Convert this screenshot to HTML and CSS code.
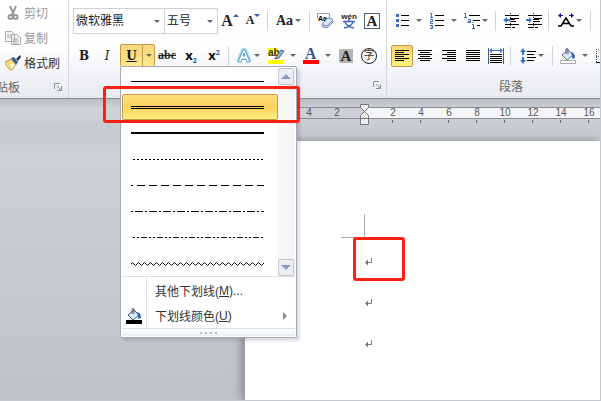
FILE: index.html
```html
<!DOCTYPE html>
<html lang="zh-CN">
<head>
<title>文档编辑</title>
<meta charset="utf-8">
<meta name="viewport" content="width=device-width, initial-scale=1">
<link rel="stylesheet" href="styles.css">
</head>
<body>

<header class="ribbon">
  <section class="group clipboard">
    <button class="cmd" disabled>
      <svg width="16" height="16" viewBox="0 0 16 16" fill="none" stroke="#999" stroke-width="2"><path d="M5 1l4 9M11 1L7 10"/><circle cx="5.500" cy="12" r="2"/><circle cx="10.500" cy="12" r="2"/></svg>
      剪切
    </button>
    <button class="cmd" disabled>
      <svg width="16" height="16" viewBox="0 0 16 16" fill="#f4f4f4" stroke="#aaa"><path d="M.5 1.500h6l3 3v7h-9zM6.500 4.500h5l4 3v7h-9z"/><path d="M2 5h4M2 7h4M8 9h5M8 11h6M8 13h5"/></svg>
      复制
    </button>
    <button class="cmd">
      <svg width="16" height="16" viewBox="0 0 16 16"><path d="M0 7l6-3 5 5-4 6c-2 0-6-3-7-8z" fill="#f5dc7a" stroke="#b89a50"/><path d="M5 9l5 0-3 5z" fill="#fffbe0"/><path d="M6 3l3-1 4 5-2 3z" fill="#405f9c"/><path d="M11 4l4-4 1 2-3 4z" fill="#26365c"/></svg>
      格式刷
    </button>
    <div class="caption">
      <span>贴板</span>
      <button class="launcher" aria-label="剪贴板选项"><svg width="8" height="8" viewBox="0 0 8 8" fill="none" stroke="#8b929c"><path d="M.5 6V.5H6M3 3l4 4M7.500 3v4.500H3"/></svg></button>
    </div>
  </section>

  <section class="group font">
    <div class="tools">
      <label class="combo combo-name"><select aria-label="字体"><option>微软雅黑</option></select></label>
      <label class="combo combo-size"><select aria-label="字号"><option>五号</option></select></label>
      <button class="tool serif grow" aria-label="增大字体">A<i class="up"></i></button>
      <button class="tool narrow serif shrink" aria-label="缩小字体">A<i class="down"></i></button>
      <span class="sep"></span>
      <button class="split compact serif case" aria-label="更改大小写">Aa<i class="arrow"></i></button>
      <span class="sep"></span>
      <button class="tool" aria-label="清除格式">
        <svg width="18" height="16" viewBox="0 0 18 16"><path d="M1.500 6V.500h12V6" fill="#fff" stroke="#8a99b5"/><text x="2" y="8" class="tiny">Aa</text><path d="M6 11l6-6 4 1 1 3-6 6-4-1z" fill="#dbe6f5" stroke="#7189b3"/><path d="M7 12l4 1 5-5" fill="none" stroke="#7189b3"/></svg>
      </button>
      <button class="tool" aria-label="拼音指南">
        <svg width="18" height="16" viewBox="0 0 18 16"><text x="9" y="6" text-anchor="middle" class="pinyin">wén</text><path d="M3 8.500h12M9 6v2M5 9c1 3 4 5 9 6M13 9c-1 3-4 5-9 6" fill="none" stroke="#3b63c4" stroke-width="1.500"/></svg>
      </button>
      <button class="tool narrow" aria-label="字符边框"><span class="boxed">A</span></button>
    </div>
    <div class="tools">
      <button class="tool narrow serif slab" aria-label="加粗">B</button>
      <button class="tool serif slab italic" aria-label="倾斜">I</button>
      <div class="underline">
        <button class="underline-main" aria-label="下划线">U</button>
        <button class="underline-drop" aria-label="下划线样式"><i class="arrow"></i></button>

        <div class="menu">
          <div class="styles">
            <div class="style-list">
              <button class="style" aria-label="单线"><svg width="133" height="5"><path d="M0 2.500h133"/></svg></button>
              <button class="style selected" aria-label="双线"><svg width="133" height="5"><path d="M0 1.500h133M0 3.500h133"/></svg></button>
              <button class="style" aria-label="粗线"><svg width="133" height="6"><path d="M0 3h133" stroke-width="2"/></svg></button>
              <button class="style" aria-label="点线"><svg width="133" height="5"><path d="M2 2.500h131" stroke-dasharray="2 2"/></svg></button>
              <button class="style" aria-label="虚线"><svg width="133" height="5"><path d="M0 2.500h2M6 2.500h127" stroke-dasharray="8 4"/></svg></button>
              <button class="style" aria-label="点划线"><svg width="133" height="5"><path d="M0 2.500h133" stroke-dasharray="2 2 8 2"/></svg></button>
              <button class="style" aria-label="双点划线"><svg width="133" height="5"><path d="M2 2.500h131" stroke-dasharray="2 2 2 2 6 2"/></svg></button>
              <button class="style" aria-label="波浪线"><svg width="133" height="5"><path id="wave" fill="none" d="M0 3"/></svg></button>
            </div>
            <div class="scroll">
              <button aria-label="向上滚动"><i class="up"></i></button>
              <button aria-label="向下滚动"><i class="down"></i></button>
            </div>
          </div>
          <div class="more">
            <button class="more-item"><span class="more-icon"></span>其他下划线(<u>M</u>)...</button>
            <button class="more-item">
              <span class="more-icon"><svg width="16" height="16" viewBox="0 0 16 16"><path d="M2 7l6-5 5 5-6 5z" fill="#dce8f6" stroke="#39537e"/><path d="M6 6V1q1-1 2 0v5" fill="none" stroke="#4b5d7c"/><path d="M10 4q5 0 5 6l-3 1q1-4-2-7z" fill="#2f62b5"/><path d="M0 12h16v4H0z"/></svg></span>
              下划线颜色(<u>U</u>)<i class="sub"></i>
            </button>
          </div>
          <div class="grip"><i></i><i></i><i></i><i></i></div>
        </div>
      </div>
      <button class="tool serif strike" aria-label="删除线">abc</button>
      <button class="tool sans script" aria-label="下标">x<sub>2</sub></button>
      <button class="tool narrow sans script" aria-label="上标">x<sup>2</sup></button>
      <span class="sep"></span>
      <button class="split compact effects" aria-label="文本效果"><svg width="16" height="16" viewBox="0 0 16 16" fill="none" stroke-linejoin="round"><path d="M2 14L7 2h2l5 12M5 10h6" stroke="#a9d9f2" stroke-width="4"/><path d="M2 14L7 2h2l5 12h-3l-1-3H6l-1 3zM7 8h2L8 5z" fill="#fff" stroke="#559bd0"/></svg><i class="arrow"></i></button>
      <button class="split" aria-label="突出显示">
        <svg width="16" height="16" viewBox="0 0 16 16"><path d="M0 0h10v8H0zM0 12h16v4H0z" fill="#ff0"/><text x="0" y="8" class="mark">ab</text><path d="M8 9l5-7 3 1-5 7-4 1z" fill="#9bb4dc" stroke="#48628f"/><path d="M5 11l3-2 1 1z" fill="#b58a25"/></svg><i class="arrow"></i>
      </button>
      <button class="split" aria-label="字体颜色"><span class="colored">A</span><i class="arrow"></i></button>
      <button class="tool" aria-label="字符底纹"><span class="shaded">A</span></button>
      <button class="tool narrow" aria-label="带圈字符"><span class="circled">字</span></button>
    </div>
    <div class="caption">
      <button class="launcher" aria-label="字体选项"><svg width="8" height="8" viewBox="0 0 8 8" fill="none" stroke="#8b929c"><path d="M.5 6V.5H6M3 3l4 4M7.500 3v4.500H3"/></svg></button>
    </div>
  </section>

  <section class="group paragraph">
    <div class="tools">
      <button class="split" aria-label="项目符号"><svg width="16" height="16" viewBox="0 0 16 16"><path d="M2 1h3v3H2zM2 6h3v3H2zM2 11h3v3H2z" fill="#3e68b8"/><path d="M7 2.500h8M7 7.500h8M7 12.500h8" stroke="#000"/></svg><i class="arrow"></i></button>
      <button class="split" aria-label="编号"><svg width="16" height="16" viewBox="0 0 16 16"><path d="M1 .5h1.500V4M1 4.500h3M1 6.500h2.500v2H1.500v2H4M1 12.500h2.500v3H1M2 14h2" fill="none" stroke="#3e68b8"/><path d="M6 2.500h9M6 7.500h9M6 12.500h9" stroke="#000"/></svg><i class="arrow"></i></button>
      <button class="split compact multilevel" aria-label="多级列表"><svg width="16" height="16" viewBox="0 0 16 16"><path d="M0 .5h1.500V4M0 4.500h3M4 6.500h2.500v3H4v-1h2M9 9v1M8 11.500h1.500V15M8 15.500h3" fill="none" stroke="#3e68b8"/><path d="M5 2.500h11M9 7.500h7M13 12.500h3" stroke="#000"/></svg><i class="arrow"></i></button>
      <span class="sep"></span>
      <button class="tool" aria-label="减少缩进量"><svg width="16" height="16" viewBox="0 0 16 16"><path d="M2 2.500h14M7 5.500h9M7 8.500h6M2 11.500h14M2 14.500h5M9 14.500h3" stroke="#000"/><path d="M7 6h5v1H7z"/><path d="M0 7l4-3v2h3v2H4v2z" fill="#3e74cc"/><path d="M7.500 0v16" stroke="#222" stroke-dasharray="1 1"/></svg></button>
      <button class="tool narrow" aria-label="增加缩进量"><svg width="16" height="16" viewBox="0 0 16 16"><path d="M2 2.500h14M8 5.500h8M8 8.500h6M2 11.500h14M2 14.500h5M9 14.500h3" stroke="#000"/><path d="M8 6h5v1H8z"/><path d="M6 7L3 4v2H0v2h3v2z" fill="#3e74cc"/><path d="M7.500 0v16" stroke="#222" stroke-dasharray="1 1"/></svg></button>
      <span class="sep"></span>
      <button class="split compact" aria-label="中文版式"><svg width="16" height="16" viewBox="0 0 16 16"><path d="M0 2.500l3-2.500v2h2v1H3v2zM16 2.500l-3-2.500v2h-2v1h2v2z" fill="#10108c"/><path d="M0 13h3l5-8 5 8h3M4 10.500h8" fill="none" stroke="#000" stroke-width="1.500"/></svg><i class="arrow"></i></button>
      <span class="sep"></span>
      <button class="split" aria-label="排序"><svg width="16" height="16" viewBox="0 0 16 16" fill="none"><path d="M2 6l2-5 2 5M3 4h3" stroke="#3e68b8"/><path d="M2 9h5l-5 6h5" stroke="#c33"/></svg></button>
    </div>
    <div class="tools">
      <button class="tool narrow active" aria-label="左对齐"><svg width="14" height="14" viewBox="0 0 14 14" stroke="#000"><path d="M0 1.500h14M0 3.500h9M0 5.500h14M0 7.500h9M0 9.500h14M0 11.500h9"/></svg></button>
      <button class="tool" aria-label="居中"><svg width="14" height="14" viewBox="0 0 14 14" stroke="#000"><path d="M0 1.500h14M2 3.500h10M0 5.500h14M2 7.500h10M0 9.500h14M2 11.500h10"/></svg></button>
      <button class="tool" aria-label="右对齐"><svg width="14" height="14" viewBox="0 0 14 14" stroke="#000"><path d="M0 1.500h14M5 3.500h9M0 5.500h14M5 7.500h9M0 9.500h14M5 11.500h9"/></svg></button>
      <button class="tool" aria-label="两端对齐"><svg width="14" height="14" viewBox="0 0 14 14" stroke="#000"><path d="M0 1.500h14M0 3.500h14M0 5.500h14M0 7.500h14M0 9.500h14M0 11.500h14"/></svg></button>
      <button class="tool narrow" aria-label="分散对齐"><svg width="16" height="16" viewBox="0 0 16 16"><path d="M.5 0v16M15.500 0v16" stroke="#4d5f80"/><path d="M1 2.500L4 0v2h8V0l3 2.500L12 5V3H4v2z" fill="#3e74cc"/><path d="M2 6.500h12M2 8.500h12M2 10.500h12M2 12.500h12M2 14.500h12" stroke="#000"/></svg></button>
      <span class="sep"></span>
      <button class="split compact" aria-label="行距"><svg width="16" height="16" viewBox="0 0 16 16"><path d="M3 0l3 4H4v3H2V4H0zM3 16l3-4H4V9H2v3H0z" fill="#3e74cc"/><path d="M7 3.500h9M7 6.500h7M7 9.500h9M7 12.500h7" stroke="#000"/></svg><i class="arrow"></i></button>
      <span class="sep"></span>
      <button class="split" aria-label="底纹"><svg width="16" height="16" viewBox="0 0 16 16"><path d="M2 7l6-5 5 5-6 5z" fill="#dce8f6" stroke="#5b7296"/><path d="M6 6V1q1-1 2 0v5" fill="none" stroke="#4b5d7c"/><path d="M10 4q5 0 5 6l-3 1q1-4-2-7z" fill="#2f62b5"/><path d="M.5 12.500h15v3H.5z" fill="#fff" stroke="#aaa"/></svg><i class="arrow"></i></button>
      <button class="tool borders" aria-label="边框"><svg width="14" height="14" viewBox="0 0 14 14" fill="none" stroke="#555" stroke-dasharray="1 1"><path d="M.5 0v14M0 .5h14M0 7.500h14"/><path d="M0 13.500h14" stroke="#000" stroke-dasharray="none"/></svg></button>
    </div>
    <div class="caption"><span>段落</span></div>
  </section>
</header>

<main class="workspace">
  <div class="ruler">
    <div class="ruler-margin"><span>4</span><span>2</span></div>
    <div class="ruler-body">
      <span>2</span><span>4</span><span>6</span><span>8</span><span>10</span><span>12</span><span>14</span><span>16</span>
    </div>
    <svg class="indent" width="9" height="21" viewBox="0 0 9 21" fill="#eee" stroke="#777"><path d="M.5.5h8v3l-4 4-4-4zM.5 14.500v-3l4-4 4 4v3zM.5 14.500h8v6h-8z"/></svg>
  </div>
  <article class="page">
    <div class="corner"></div>
    <p class="line"><svg width="8" height="8" viewBox="0 0 8 8"><path d="M6.500 0v4.500H2" fill="none" stroke="#777"/><path d="M0 4.500l3-3v6z" fill="#777"/></svg><span class="callout"></span></p>
    <p class="line"><svg width="8" height="8" viewBox="0 0 8 8"><path d="M6.500 0v4.500H2" fill="none" stroke="#777"/><path d="M0 4.500l3-3v6z" fill="#777"/></svg></p>
    <p class="line"><svg width="8" height="8" viewBox="0 0 8 8"><path d="M6.500 0v4.500H2" fill="none" stroke="#777"/><path d="M0 4.500l3-3v6z" fill="#777"/></svg></p>
  </article>
</main>

<script>
  // repeat the wave over the full width of the sample
  var d = 'M0 3';
  for (var x = 0; x < 133; x += 6) {
    d += 'q1.5 -3 3 0t3 0';
  }
  document.getElementById('wave').setAttribute('d', d);
</script>

</body>
</html>
```
FILE: styles.css
```css
*,
*::before,
*::after {
  box-sizing: border-box;
}

body {
  position: relative;
  margin: 0;
  height: 100vh;
  display: flex;
  flex-direction: column;
  overflow: hidden;
  border-right: 1px solid #c5c8cb;
  border-bottom: 1px solid #c5c8cb;
  font-family: "Liberation Sans", "Noto Sans CJK SC", sans-serif;
  font-size: 12px;
  color: #333;
}

/* resize handles on the window frame */
body::before,
body::after {
  content: "";
  position: absolute;
  z-index: 3;
  background: #444;
}

body::before {
  left: 50%;
  bottom: -1px;
  width: 3px;
  height: 1px;
}

body::after {
  top: 50%;
  right: -1px;
  width: 1px;
  height: 3px;
}

button {
  display: flex;
  align-items: center;
  justify-content: center;
  flex: none;
  margin: 0;
  padding: 0;
  border: 0;
  background: none;
  font: inherit;
  color: inherit;
}

svg {
  flex: none;
}

/* Ribbon */
.ribbon {
  display: flex;
  position: relative;
  z-index: 2;
  border-bottom: 1px solid #8a8e94;
  background: linear-gradient(#fff, #fdfdfe 50%, #e7eaef);
}

.group {
  display: flex;
  flex-direction: column;
  flex: none;
  border-right: 1px solid #d3d6dc;
}

.clipboard {
  width: 69px;
}

.font {
  width: 318px;
  padding: 3px 0 0 4px;
}

.paragraph {
  flex: 1;
  min-width: 0;
  padding: 3px 0 0 3px;
  border-right: 0;
}

.cmd {
  justify-content: flex-start;
  gap: 3px;
  height: 25px;
  padding-left: 5px;
  white-space: nowrap;
}

.cmd:disabled {
  color: #999;
}

.caption {
  display: flex;
  align-items: center;
  justify-content: center;
  height: 24px;
  color: #666;
}

.clipboard .caption {
  height: 23px;
  justify-content: space-between;
  padding-right: 6px;
  margin-left: -4px;
}

.font .caption {
  justify-content: flex-end;
  padding-right: 5px;
}

.paragraph .caption {
  padding-left: 32px;
}

.tools {
  display: flex;
  align-items: center;
  height: 35px;
}

.paragraph .tools + .tools {
  padding-left: 1px;
}

.combo {
  display: flex;
  position: relative;
  height: 26px;
  border: 1px solid #cdd0d5;
  background: #fff;
}

.combo-name {
  width: 92px;
}

.combo-size {
  width: 54px;
  margin-left: -1px;
}

.combo select {
  flex: 1;
  min-width: 0;
  padding: 0 0 0 2px;
  border: 0;
  appearance: none;
  background: none;
  font: inherit;
  color: #222;
}

.combo::after {
  content: "";
  position: absolute;
  right: 4px;
  top: 11px;
  border: 3px solid transparent;
  border-top-color: #666;
  border-bottom: 0;
}

.tool {
  width: 24px;
  height: 22px;
}

.tool.narrow {
  width: 22px;
}

.split {
  gap: 6px;
  width: 35px;
  height: 22px;
}

.compact {
  gap: 2px;
}

.effects,
.multilevel {
  width: 32px;
}

.active {
  border: 1px solid #c29b4a;
  border-radius: 2px;
  background: linear-gradient(#fbd57a, #fff07c);
}

/* runs past the window edge */
.borders {
  justify-content: flex-start;
  padding-left: 5px;
}

.arrow {
  border: 3px solid transparent;
  border-top-color: #666;
  border-bottom: 0;
}

.sep {
  flex: none;
  width: 1px;
  height: 20px;
  margin: 0 3px;
  background: #d0d3d8;
}

.serif {
  font-family: "Liberation Serif", serif;
  font-size: 14px;
  font-weight: bold;
  color: #222;
}

.slab {
  font-family: "DejaVu Serif", serif;
  font-size: 12px;
}

.italic {
  font-style: italic;
  font-weight: normal;
}

.grow {
  font-size: 16px;
}

.up,
.down {
  border: 3px solid transparent;
}

.up {
  border-bottom-color: #3e5f9f;
  border-top: 0;
}

.down {
  border-top-color: #3e5f9f;
  border-bottom: 0;
}

.grow .up,
.shrink .down {
  align-self: flex-start;
  margin-top: 4px;
}

.shrink {
  font-size: 12px;
}

.strike {
  font-size: 12px;
  text-decoration: line-through;
}

.sans {
  font-family: "Open Sans", sans-serif;
  font-size: 13px;
  font-weight: bold;
  color: #111;
}

.script {
  line-height: 16px;
  padding-bottom: 2px;
}

.script sub,
.script sup {
  font-size: 7px;
  line-height: 7px;
  color: #2b58b0;
}

.script sub {
  align-self: flex-end;
  margin-bottom: 1px;
}

.script sup {
  align-self: flex-start;
  margin-top: 4px;
}

.boxed,
.shaded,
.colored {
  display: block;
  width: 16px;
  height: 16px;
  font: bold 15px/14px "Liberation Serif", serif;
  text-align: center;
  color: #222;
}

.boxed {
  border: 1px solid #52617c;
}

.shaded {
  width: 14px;
  height: 14px;
  background: #b5b5b5;
}

.colored {
  font-size: 16px;
  line-height: 12px;
  border-bottom: 4px solid #f00;
  color: #34528c;
}

.circled {
  width: 16px;
  height: 16px;
  border: 1px solid #222;
  border-radius: 50%;
  font-size: 11px;
  line-height: 13px;
}

.tiny {
  font: bold 7px "Liberation Sans", sans-serif;
}

.pinyin {
  font: bold 8px "Liberation Sans", sans-serif;
  fill: #222;
}

.mark {
  font: bold 10px "Liberation Sans", sans-serif;
  fill: #333;
}

/* Underline button and its menu */
.underline {
  display: flex;
  position: relative;
  width: 35px;
  height: 23px;
  margin-left: 1px;
  border: 1px solid #c29b4a;
  border-radius: 2px;
  background: linear-gradient(#fbd57a, #ffe98a);
}

.underline-main {
  width: 21px;
  font: bold 12px "DejaVu Serif", serif;
  text-decoration: underline;
  color: #111;
}

.underline-drop {
  flex: 1;
  border-left: 1px solid #c29b4a;
}

.menu {
  position: absolute;
  top: 100%;
  left: -1px;
  width: 177px;
  padding: 1px;
  border: 1px solid #a5abb5;
  border-radius: 2px;
  background: #fff;
  box-shadow: 3px 3px 3px rgba(90, 80, 130, 0.2);
}

.styles {
  display: flex;
  position: relative;
  border-bottom: 1px solid #dde1e6;
}

.style-list {
  flex: 1;
}

.style {
  width: 100%;
  height: 26px;
  padding-right: 5px;
  stroke: #000;
}

.style.selected {
  border: 1px solid #c29b4a;
  border-radius: 2px;
  background: linear-gradient(#fee17c, #fdd05f 50%, #fff07c);
}

.scroll {
  display: flex;
  flex-direction: column;
  justify-content: space-between;
  width: 17px;
  padding-right: 1px;
  background: #f6f6f7;
}

.scroll button {
  height: 17px;
  border: 1px solid #c1c5cc;
  border-radius: 2px;
  background: #eceef1;
}

.scroll .up,
.scroll .down {
  border-left-width: 5px;
  border-right-width: 5px;
}

.scroll .up {
  border-bottom: 5px solid #8f9bc4;
}

.scroll .down {
  border-top: 5px solid #8f9bc4;
}

.more {
  padding: 1px 0 0;
}

.more-item {
  justify-content: flex-start;
  width: 100%;
  height: 25px;
}

.more-icon {
  display: flex;
  align-items: center;
  align-self: stretch;
  width: 25px;
  margin-right: 8px;
  padding-left: 4px;
  border-right: 1px solid #dde1e6;
}

.sub {
  margin: 0 8px 0 auto;
  border: 4px solid transparent;
  border-left-color: #888;
  border-right: 0;
}

.grip {
  display: flex;
  align-items: center;
  justify-content: center;
  gap: 3px;
  height: 8px;
  border-top: 1px solid #d5dfe8;
  background: linear-gradient(#fff, #eceff2);
}

.grip i {
  width: 2px;
  height: 2px;
  background: #b4b9c2;
}

/* red frame round the selected style */
.styles::after {
  content: "";
  position: absolute;
  top: 18px;
  left: -19px;
  width: 197px;
  height: 37px;
  border: 3px solid #fb2214;
  border-radius: 3px;
}

/* Document */
.workspace {
  display: flex;
  flex-direction: column;
  flex: 1;
  padding: 8px 0 0 244px;
  background: linear-gradient(#b9bdc2, #cfd2d7 10px, #c8cbd0 30px, #cdd0d5 60px, #bfc3c8);
}

.ruler {
  display: flex;
  position: relative;
  height: 12px;
  border-top: 1px solid #888c92;
  border-bottom: 1px solid #888c92;
  font-size: 10px;
  line-height: 10px;
  text-align: center;
  color: #555;
}

.ruler span {
  flex: none;
  position: relative;
  width: 28px;
}

.ruler-margin {
  display: flex;
  justify-content: flex-end;
  width: 121px;
  padding-right: 14px;
}

.ruler-body {
  display: flex;
  flex: 1;
  min-width: 0;
  padding-left: 14px;
  background: #f5f6f7;
}

/* tick under each number */
.ruler-body span::after {
  content: "";
  position: absolute;
  top: 12px;
  left: 13px;
  width: 1px;
  height: 3px;
  background: #666;
}

.indent {
  position: absolute;
  top: -4px;
  left: 116px;
}

.page {
  flex: 1;
  margin-top: 22px;
  padding: 73px 0 0 96px;
  border-left: 1px solid #9ca0a7;
  background: #fff;
  box-shadow: -2px 0 9px rgba(60, 70, 75, 0.5);
}

.corner {
  width: 24px;
  height: 24px;
  margin-bottom: 3px;
  border-right: 1px solid #aaa;
  border-bottom: 1px solid #aaa;
}

.line {
  display: flex;
  align-items: center;
  position: relative;
  height: 41px;
  margin: 0;
  padding-left: 24px;
}

.callout {
  position: absolute;
  top: -4px;
  left: 12px;
  width: 52px;
  height: 44px;
  border: 3px solid #fb2214;
  border-radius: 3px;
}
```
